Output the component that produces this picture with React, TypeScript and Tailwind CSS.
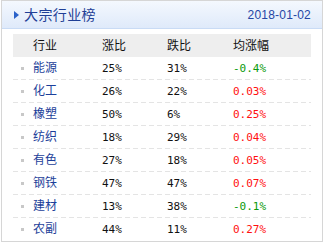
import React from 'react';

type Row = {
  name: string;
  up: string;
  down: string;
  avg: string;
};

const rows: Row[] = [
  { name: '能源', up: '25%', down: '31%', avg: '-0.4%' },
  { name: '化工', up: '26%', down: '22%', avg: '0.03%' },
  { name: '橡塑', up: '50%', down: '6%', avg: '0.25%' },
  { name: '纺织', up: '18%', down: '29%', avg: '0.04%' },
  { name: '有色', up: '27%', down: '18%', avg: '0.05%' },
  { name: '钢铁', up: '47%', down: '47%', avg: '0.07%' },
  { name: '建材', up: '13%', down: '38%', avg: '-0.1%' },
  { name: '农副', up: '44%', down: '11%', avg: '0.27%' },
];

const font = "font-['Liberation_Sans','Noto_Sans_CJK_SC',sans-serif]";
const mono = "font-['DejaVu_Sans_Mono',monospace] text-[11px]";

const App: React.FC = () => {
  return (
    <div className={`w-[324px] h-[243px] bg-white ${font}`}>
      <div className="ml-px w-[322px] h-[242px] border border-[#d6d6d6] bg-white">
        {/* title bar */}
        <div className="h-[28px] flex items-center justify-between pl-[12px] pr-[11px] border-b border-[#c9dbf5] bg-gradient-to-b from-[#f4f8fe] to-[#dfeafa]">
          <div className="flex items-center gap-[5px]">
            <svg width="5" height="8" viewBox="0 0 5 8">
              <path d="M0 0 L5 4 L0 8 Z" fill="#2b62c9" />
            </svg>
            <span className="text-[14px] leading-none text-[#1f3f96] tracking-[0.4px]">大宗行业榜</span>
          </div>
          <span className="text-[12px] leading-none text-[#2546a5] tracking-[0.2px]">2018-01-02</span>
        </div>

        {/* table */}
        <div className="mx-[11px] mt-[5px] text-[12px] leading-none">
          <div className="grid grid-cols-[89px_65px_66px_80px] h-[23px] items-center bg-[#eeeeee] text-[#111]">
            <span className="pl-[20px]">行业</span>
            <span>涨比</span>
            <span>跌比</span>
            <span>均涨幅</span>
          </div>
          {rows.map((row, i) => {
            const negative = row.avg.startsWith('-');
            return (
              <div key={row.name}>
                <div className="grid grid-cols-[89px_65px_66px_80px] h-[22px] items-center">
                  <div className="flex items-center">
                    <span className="ml-[8px] w-[3px] h-[3px] bg-[#c8c8c8]" />
                    <span className="ml-[9px] text-[#1d3f9a]">{row.name}</span>
                  </div>
                  <span className={`${mono} text-[#111]`}>{row.up}</span>
                  <span className={`${mono} text-[#111]`}>{row.down}</span>
                  <span className={`${mono} ${negative ? 'text-[#0a9a0a]' : 'text-[#ff1010]'}`}>{row.avg}</span>
                </div>
                {i < rows.length - 1 && (
                  <div className="h-px bg-[repeating-linear-gradient(90deg,#e4e4e4_0_5px,transparent_5px_8px)]" />
                )}
              </div>
            );
          })}
        </div>
      </div>
    </div>
  );
};

export default App;
